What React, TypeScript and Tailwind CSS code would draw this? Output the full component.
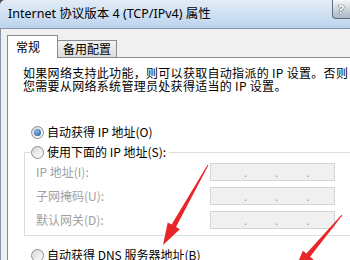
import React from "react";

function Radio({ checked }: { checked?: boolean }) {
  return (
    <span className="flex h-[13px] w-[13px] shrink-0 items-center justify-center rounded-full border border-[#8e8f8f] bg-gradient-to-br from-[#d6d6d6] to-[#ffffff]">
      {checked && (
        <span className="h-[7px] w-[7px] rounded-full bg-[radial-gradient(circle_at_40%_35%,#8ec0f0,#1c4d8c)]" />
      )}
    </span>
  );
}

function IpBox() {
  return (
    <div className="flex h-[18px] w-[125px] items-center gap-[28px] border border-[#d4d4d4] bg-[#f0f0f0] pl-[33px] text-[11px] text-[#9a9a9a]">
      <span>.</span>
      <span>.</span>
      <span>.</span>
    </div>
  );
}

const fields = ["IP 地址(I):", "子网掩码(U):", "默认网关(D):"];

export default function App() {
  return (
    <div className="relative h-[260px] w-[350px] overflow-hidden bg-[#4a4a4a] font-['Noto_Sans','Noto_Sans_CJK_SC',sans-serif] text-[12px] text-black">
      {/* title bar */}
      <div className="flex h-[28px] items-start justify-between rounded-tl-[5px] bg-gradient-to-b from-[#e3ecf7] to-[#bcd4ee]">
        <span className="self-center pl-[8px] pt-[1px] text-[12.5px] leading-none">
          Internet 协议版本 4 (TCP/IPv4) 属性
        </span>
        <div className="flex h-[19px] w-[18px] items-center rounded-bl-[4px] border-b border-l border-[#5f6e80] bg-gradient-to-b from-[#f4f6f8] to-[#aab6c2] pl-[5px] text-[13px] font-bold leading-none text-white [text-shadow:0_0_1px_#333,0_0_1px_#333]">
          ?
        </div>
      </div>

      <div className="flex h-[232px]">
        <div className="w-[6px] bg-gradient-to-r from-[#a8c0dc] to-[#d3e1f0]" />
        <div className="flex-1 border-l border-t border-[#8795a6] bg-[#f0f0f0] pl-[6px] pt-[6px]">
          {/* tabs */}
          <div className="relative z-10 flex items-end">
            <div className="-mb-px h-[23px] w-[51px] border border-b-0 border-[#898c95] bg-white pl-[8px] pt-[4px] font-['Noto_Sans_CJK_SC',sans-serif] leading-[14px]">
              常规
            </div>
            <div className="h-[17px] border border-b-0 border-l-0 border-[#898c95] bg-gradient-to-b from-[#f3f3f3] to-[#dcdcdc] px-[5px] pt-[1px] font-['Noto_Sans_CJK_SC',sans-serif] leading-[14px]">
              备用配置
            </div>
          </div>

          {/* panel */}
          <div className="h-[300px] w-[345px] border border-[#898c95] bg-white pl-[15px] pt-[8px] font-['Noto_Sans_CJK_SC',sans-serif]">
            <p className="whitespace-nowrap text-[12px] leading-[13px] tracking-[0.3px]">
              如果网络支持此功能，则可以获取自动指派的 IP 设置。否则，
              <br />
              您需要从网络系统管理员处获得适当的 IP 设置。
            </p>

            <div className="ml-[8px] mt-[30px] flex h-[20px] items-center gap-[3px]">
              <Radio checked />
              <span>自动获得 IP 地址(O)</span>
            </div>

            <fieldset className="ml-[1px] w-[330px] border border-[#d5dfe5] pb-[6px]">
              <legend className="ml-[6px] pr-[3px]">
                <div className="flex h-[20px] items-center gap-[3px]">
                  <Radio />
                  <span>使用下面的 IP 地址(S):</span>
                </div>
              </legend>
              <div className="mt-[1px] flex flex-col gap-[6px] pl-[11px]">
                {fields.map((f) => (
                  <div key={f} className="flex h-[18px] items-center">
                    <span className="w-[174px] text-[#a0a0a0]">{f}</span>
                    <IpBox />
                  </div>
                ))}
              </div>
            </fieldset>

            <div className="ml-[8px] mt-[9px] flex h-[20px] items-center gap-[3px]">
              <Radio />
              <span>自动获得 DNS 服务器地址(B)</span>
            </div>
          </div>
        </div>
      </div>

      {/* red arrows */}
      <svg className="pointer-events-none absolute left-0 top-0" width="350" height="260" viewBox="0 0 350 260">
        <polygon
          points="208.4,165.2 176,227 179.9,229.2 163,245 167.7,222.4 171.6,224.6 207.6,164.8"
          fill="#e8262a"
        />
        <polygon
          points="342.4,215.3 310.1,256.8 313.6,259.7 294,272 302.8,250.7 306.3,253.6 341.6,214.7"
          fill="#e8262a"
        />
      </svg>
    </div>
  );
}
